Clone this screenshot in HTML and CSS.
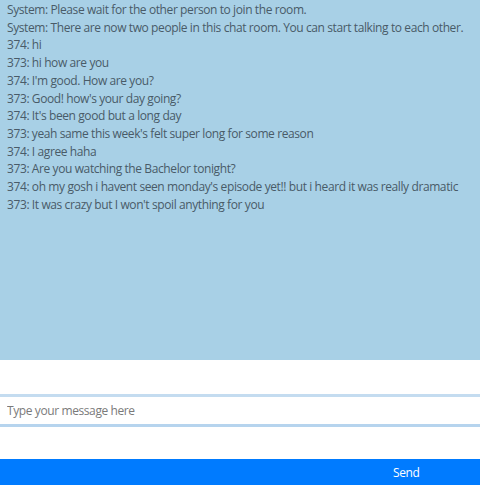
FILE: index.html
```html
<!DOCTYPE html>
<html>
<head>
    <meta charset="UTF-8">
    <title>Chat</title>
    <link rel="stylesheet" href="styles.css">
</head>
<body>
    <div class="chat_box">
        <div class="msg">System: Please wait for the other person to join the room.</div>
        <div class="msg">System: There are now two people in this chat room. You can start talking to each other.</div>
        <div class="msg">374: hi</div>
        <div class="msg">373: hi how are you</div>
        <div class="msg">374: I'm good. How are you?</div>
        <div class="msg">373: Good! how's your day going?</div>
        <div class="msg">374: It's been good but a long day</div>
        <div class="msg">373: yeah same this week's felt super long for some reason</div>
        <div class="msg">374: I agree haha</div>
        <div class="msg">373: Are you watching the Bachelor tonight?</div>
        <div class="msg">374: oh my gosh i havent seen monday's episode yet!! but i heard it was really dramatic</div>
        <div class="msg">373: It was crazy but I won't spoil anything for you</div>
    </div>
    <div class="input_area">
        <input class="msg_input" type="text" placeholder="Type your message here">
    </div>
    <button class="send_bt">Send</button>
</body>
</html>
```

FILE: styles.css
```css
*{
    margin: 0;
    padding: 0;
    box-sizing: border-box;
}
body{
    font-family: "Open Sans", "Noto Sans", sans-serif;
    font-size: 12px;
    letter-spacing: -0.4px;
    background: #fff;
}
.chat_box{
    height: 360px;
    padding: 1px 7px;
    background-color: #a8d0e6;
    color: #495b68;
}
.msg{
    line-height: 17.7px;
    white-space: nowrap;
}
.input_area{
    height: 99px;
    display: flex;
    align-items: center;
    padding-top: 2px;
}
.msg_input{
    width: 100%;
    height: 33px;
    border: none;
    border-top: 3px solid #c4dcf0;
    border-bottom: 3px solid #b6d4ee;
    padding: 0 7px;
    font-family: inherit;
    font-size: 12px;
    letter-spacing: -0.4px;
    color: #333;
    outline: none;
}
.msg_input::placeholder{
    color: #7a7a7a;
}
.send_bt{
    display: block;
    width: 100%;
    height: 26px;
    border: none;
    background-color: #007bff;
    color: #fff;
    font-family: inherit;
    font-size: 12px;
    letter-spacing: -0.4px;
    text-align: left;
    padding-left: 393px;
}
```
